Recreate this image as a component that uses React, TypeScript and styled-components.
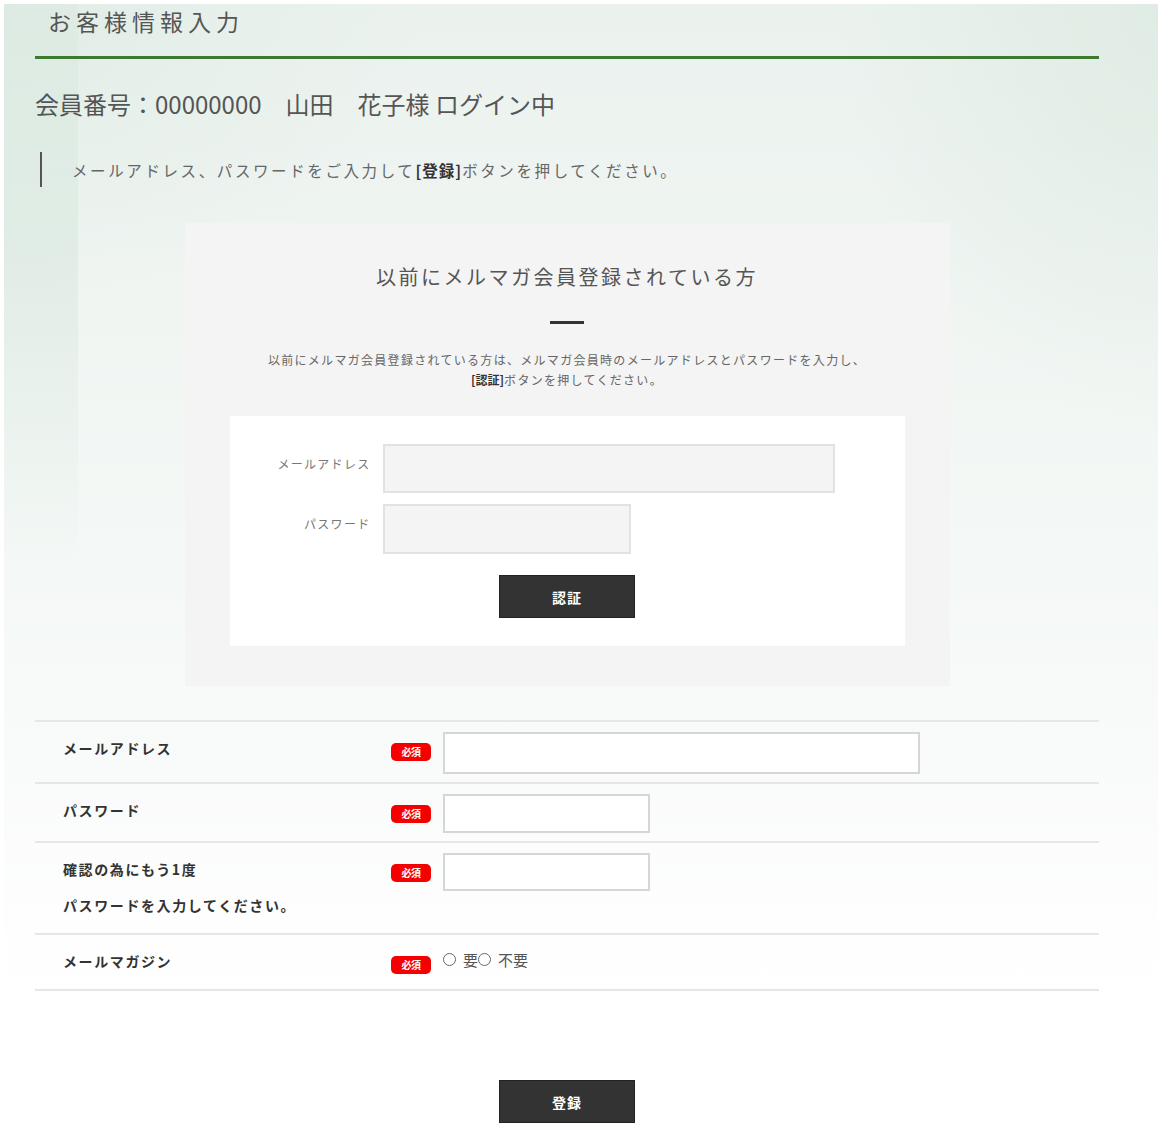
import React from "react";
import styled, { createGlobalStyle } from "styled-components";

const GlobalStyle = createGlobalStyle`
  html, body { margin: 0; padding: 0; background: #fff; }
  body {
    font-family: "Noto Sans CJK JP", "Noto Sans", sans-serif;
    color: #555;
  }
  * { box-sizing: border-box; }
`;

const Page = styled.div`
  margin: 4px 4px 0 4px;
  min-height: 1144px;
  padding: 0 59px 26px 31px;
  background:
    linear-gradient(180deg, rgba(208, 228, 216, 0.25) 0, rgba(208, 228, 216, 0.45) 45%, rgba(208, 228, 216, 0) 100%) 0 0 / 74px 560px no-repeat,
    radial-gradient(ellipse 320px 420px at 100% 0, rgba(218, 233, 224, 0.7), rgba(218, 233, 224, 0) 100%),
    radial-gradient(ellipse 420px 300px at 0 0, rgba(218, 233, 224, 0.55), rgba(218, 233, 224, 0) 100%),
    linear-gradient(180deg, #ebf2ee 0, #f0f5f2 300px, #f4f8f6 560px, #f9fbfa 760px, #fdfefd 920px, #fff 1020px);
`;

const Title = styled.h1`
  margin: 0;
  padding: 0 13px 18px;
  font-size: 23px;
  line-height: 34px;
  font-weight: 400;
  letter-spacing: 5px;
  color: #555;
  border-bottom: 3px solid #3b7a30;
`;

const MemberLine = styled.p`
  margin: 29px 0 0;
  font-size: 24px;
  line-height: 32px;
  color: #555;
  white-space: pre;
`;

const Note = styled.p`
  margin: 32px 0 0 5px;
  padding-left: 30px;
  border-left: 2px solid #555;
  height: 35px;
  display: flex;
  align-items: center;
  font-size: 15.5px;
  letter-spacing: 2.6px;
  color: #666;
  b { color: #333; font-weight: 700; letter-spacing: 1px; }
`;

const Panel = styled.section`
  width: 765px;
  margin: 36px auto 0;
  background: #f4f4f4;
  padding: 39px 45px 40px;
  display: flex;
  flex-direction: column;
  align-items: center;
`;

const PanelHeading = styled.h2`
  margin: 0;
  font-size: 20px;
  line-height: 30px;
  font-weight: 400;
  letter-spacing: 2.5px;
  color: #555;
`;

const Dash = styled.span`
  display: block;
  width: 34px;
  height: 3px;
  background: #333;
  margin-top: 29px;
`;

const PanelText = styled.p`
  margin: 26px 0 0;
  font-size: 12px;
  line-height: 20px;
  letter-spacing: 1.3px;
  text-align: center;
  color: #666;
  b { color: #333; font-weight: 700; letter-spacing: 0; }
`;

const LoginBox = styled.div`
  align-self: stretch;
  margin-top: 26px;
  background: #fff;
  padding: 28px 0;
  display: flex;
  flex-direction: column;
  align-items: center;
`;

const LoginRow = styled.div`
  align-self: stretch;
  display: grid;
  grid-template-columns: 141px 1fr;
  column-gap: 12px;
  & + & { margin-top: 11px; }
`;

const LoginLabel = styled.label`
  text-align: right;
  padding-top: 10px;
  font-size: 12px;
  line-height: 20px;
  letter-spacing: 1.3px;
  color: #777;
`;

const GrayInput = styled.input<{ $w: number; $h: number }>`
  width: ${(p) => p.$w}px;
  height: ${(p) => p.$h}px;
  background: #f4f4f4;
  border: 2px solid #e2e2e2;
  outline: none;
  padding: 0 8px;
  font: inherit;
`;

const DarkButton = styled.button<{ $top: number }>`
  margin-top: ${(p) => p.$top}px;
  width: 136px;
  height: 43px;
  background: #333;
  border: 1px solid #222;
  color: #fff;
  font-family: inherit;
  font-size: 14px;
  font-weight: 700;
  letter-spacing: 1px;
  cursor: pointer;
`;

const FormTable = styled.div`
  margin-top: 34px;
  border-top: 2px solid #e6e6e6;
`;

const FormRow = styled.div`
  display: grid;
  grid-template-columns: 356px 52px 1fr;
  align-items: start;
  padding: 8px 0 10px;
  border-bottom: 2px solid #e6e6e6;
`;

const FieldLabel = styled.div`
  padding-left: 28px;
  font-size: 14px;
  line-height: 36px;
  font-weight: 700;
  letter-spacing: 1.6px;
  color: #333;
`;

const Badge = styled.span`
  margin-top: 13px;
  width: 40px;
  height: 18px;
  border-radius: 5px;
  background: #f40000;
  color: #fff;
  font-size: 10px;
  font-weight: 700;
  line-height: 18px;
  text-align: center;
  letter-spacing: -0.5px;
`;

const WhiteInput = styled.input<{ $w: number; $h: number }>`
  margin: 2px 0 -2px;
  width: ${(p) => p.$w}px;
  height: ${(p) => p.$h}px;
  background: #fff;
  border: 2px solid #d6d6d6;
  outline: none;
  padding: 0 8px;
  font: inherit;
`;

const RadioGroup = styled.div`
  display: flex;
  align-items: center;
  height: 36px;
  font-size: 15px;
  color: #555;
`;

const RadioOption = styled.label`
  display: inline-flex;
  align-items: center;
  margin-top: -4px;
`;

const Radio = styled.input`
  appearance: none;
  -webkit-appearance: none;
  margin: 0 7px 0 0;
  width: 13px;
  height: 13px;
  border: 1px solid #666;
  border-radius: 50%;
  background: #fff;
`;

const Actions = styled.div`
  display: flex;
  justify-content: center;
`;

export default function App() {
  return (
    <>
      <GlobalStyle />
      <Page>
        <Title>お客様情報入力</Title>
        <MemberLine>会員番号：00000000　山田　花子様 ログイン中</MemberLine>
        <Note>
          <span>
            メールアドレス、パスワードをご入力して<b>[登録]</b>ボタンを押してください。
          </span>
        </Note>

        <Panel>
          <PanelHeading>以前にメルマガ会員登録されている方</PanelHeading>
          <Dash />
          <PanelText>
            以前にメルマガ会員登録されている方は、メルマガ会員時のメールアドレスとパスワードを入力し、
            <br />
            <b>[認証]</b>ボタンを押してください。
          </PanelText>
          <LoginBox>
            <LoginRow>
              <LoginLabel>メールアドレス</LoginLabel>
              <GrayInput type="text" $w={452} $h={49} />
            </LoginRow>
            <LoginRow>
              <LoginLabel>パスワード</LoginLabel>
              <GrayInput type="password" $w={248} $h={50} />
            </LoginRow>
            <DarkButton $top={21}>認証</DarkButton>
          </LoginBox>
        </Panel>

        <FormTable>
          <FormRow>
            <FieldLabel>メールアドレス</FieldLabel>
            <Badge>必須</Badge>
            <WhiteInput type="text" $w={477} $h={42} />
          </FormRow>
          <FormRow>
            <FieldLabel>パスワード</FieldLabel>
            <Badge>必須</Badge>
            <WhiteInput type="password" $w={207} $h={39} />
          </FormRow>
          <FormRow>
            <FieldLabel>
              確認の為にもう1度
              <br />
              パスワードを入力してください。
            </FieldLabel>
            <Badge>必須</Badge>
            <WhiteInput type="password" $w={207} $h={38} />
          </FormRow>
          <FormRow>
            <FieldLabel>メールマガジン</FieldLabel>
            <Badge>必須</Badge>
            <RadioGroup>
              <RadioOption>
                <Radio type="radio" name="mag" />要
              </RadioOption>
              <RadioOption>
                <Radio type="radio" name="mag" />不要
              </RadioOption>
            </RadioGroup>
          </FormRow>
        </FormTable>

        <Actions>
          <DarkButton $top={89}>登録</DarkButton>
        </Actions>
      </Page>
    </>
  );
}
